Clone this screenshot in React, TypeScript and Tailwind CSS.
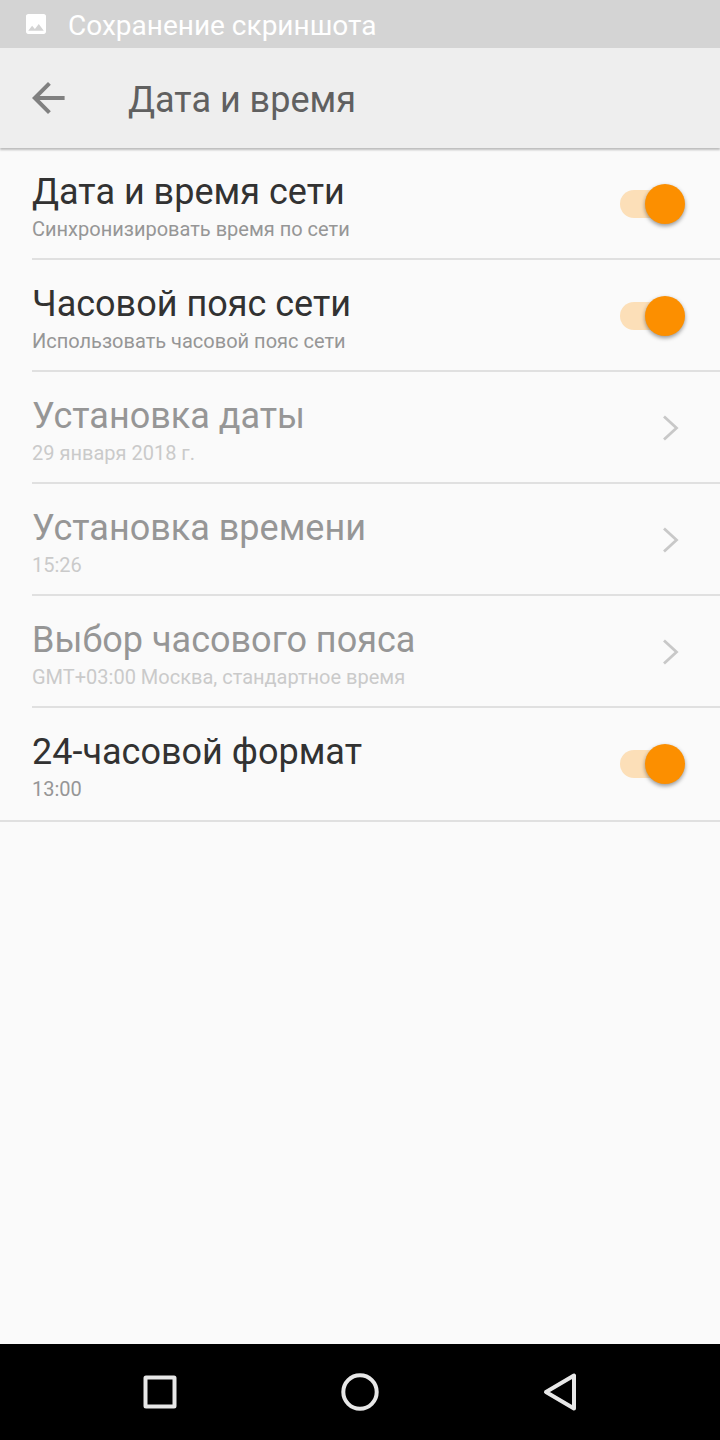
import React, { useState } from "react";
import clsx from "clsx";

type Setting = {
    id: string;
    title: string;
    summary: string;
    kind: "switch" | "link";
};

const settings: Setting[] = [
    { id: "network-time", title: "Дата и время сети", summary: "Синхронизировать время по сети", kind: "switch" },
    { id: "network-zone", title: "Часовой пояс сети", summary: "Использовать часовой пояс сети", kind: "switch" },
    { id: "set-date", title: "Установка даты", summary: "29 января 2018 г.", kind: "link" },
    { id: "set-time", title: "Установка времени", summary: "15:26", kind: "link" },
    { id: "set-zone", title: "Выбор часового пояса", summary: "GMT+03:00 Москва, стандартное время", kind: "link" },
    { id: "format-24", title: "24-часовой формат", summary: "13:00", kind: "switch" },
];

function RowText({ title, summary, muted }: { title: string; summary: string; muted?: boolean }) {
    return (
        <span className="flex min-w-0 flex-1 flex-col gap-1 pt-[22px] pb-4 text-left">
            <span className={clsx("text-4xl/10", muted ? "text-[#969696]" : "text-[#323232]")}>{title}</span>
            <span className={clsx("text-xl/[26px]", muted ? "text-[#cacaca]" : "text-[#969696]")}>{summary}</span>
        </span>
    );
}

function SwitchRow({ setting }: { setting: Setting }) {
    const [on, setOn] = useState(true);

    return (
        <label htmlFor={setting.id} className="flex items-center pt-0.5 pr-[35px]">
            <RowText title={setting.title} summary={setting.summary} />
            {/* track is the ::before, thumb is the ::after */}
            <input
                id={setting.id}
                type="checkbox"
                role="switch"
                checked={on}
                onChange={(e) => setOn(e.target.checked)}
                className="relative h-10 w-[65px] shrink-0 appearance-none before:absolute before:top-1.5 before:left-0 before:h-7 before:w-15 before:rounded-full before:bg-[#d0d0d0] after:absolute after:top-0 after:left-0 after:size-10 after:rounded-full after:bg-[#f1f1f1] after:shadow-[0_2px_4px_rgba(0,0,0,0.4)] checked:before:bg-[#fcdfb8] checked:after:left-[25px] checked:after:bg-[#fc8f00]"
            />
        </label>
    );
}

function LinkRow({ setting }: { setting: Setting }) {
    return (
        <button type="button" disabled className="flex w-full items-center pt-0.5 pr-10">
            <RowText title={setting.title} summary={setting.summary} muted />
            <svg viewBox="0 0 18 28" className="h-7 w-[18px] shrink-0" fill="none" stroke="#c8c8c8" strokeWidth="2.8" aria-hidden="true">
                <path d="M2 2.5 L14.5 14 L2 25.5" />
            </svg>
        </button>
    );
}

export default function App() {
    return (
        <div className="flex min-h-screen flex-col bg-[#fafafa] font-['Roboto','Noto_Sans',sans-serif]">
            <div className="flex h-12 items-center bg-[#d4d4d4] pl-[26px] text-white">
                <svg viewBox="3 3 18 18" className="size-5 shrink-0" fill="currentColor" aria-hidden="true">
                    <path d="M21 19V5c0-1.1-.9-2-2-2H5c-1.1 0-2 .9-2 2v14c0 1.1.9 2 2 2h14c1.1 0 2-.9 2-2zM8.500 13.500l2.500 3.010L14.500 12l4.500 6H5l3.500-4.500z" />
                </svg>
                <span className="pt-1 pl-[22px] text-[28px]/8">Сохранение скриншота</span>
            </div>

            <header className="relative flex h-[100px] items-center bg-[#eeeeee] pl-6 shadow-[0_2px_2px_rgba(0,0,0,0.25)]">
                <button type="button" aria-label="Назад" className="size-12 text-[#808080]">
                    <svg viewBox="0 0 24 24" className="size-12" fill="currentColor" aria-hidden="true">
                        <path d="M20.300 11H7.830l5.590-5.590L12 4l-8 8 8 8 1.410-1.410L7.830 13H20.300v-2z" />
                    </svg>
                </button>
                <h1 className="pt-1 pl-14 text-4xl/10 text-[#606060]">Дата и время</h1>
            </header>

            <main className="flex-1">
                <ul className="border-b-2 border-[#e0e0e0] pb-0.5 pl-8">
                    {settings.map((s, i) => (
                        <li key={s.id} className={clsx(i < settings.length - 1 && "border-b-2 border-[#e0e0e0]")}>
                            {s.kind === "switch" ? <SwitchRow setting={s} /> : <LinkRow setting={s} />}
                        </li>
                    ))}
                </ul>
            </main>

            <nav className="grid h-24 grid-cols-3 bg-black px-15 text-[#e8e8e8]">
                <button type="button" aria-label="Недавние" className="flex items-center justify-center">
                    <svg viewBox="0 0 40 40" className="size-10" fill="none" stroke="currentColor" strokeWidth="4" strokeLinejoin="round" aria-hidden="true">
                        <rect x="5.500" y="5.500" width="29" height="29" rx="0.5" />
                    </svg>
                </button>
                <button type="button" aria-label="Домой" className="flex items-center justify-center">
                    <svg viewBox="0 0 40 40" className="size-10" fill="none" stroke="currentColor" strokeWidth="4" aria-hidden="true">
                        <circle cx="20" cy="20" r="16.700" />
                    </svg>
                </button>
                <button type="button" aria-label="Обратно" className="flex items-center justify-center">
                    <svg viewBox="0 0 40 40" className="size-10" fill="none" stroke="currentColor" strokeWidth="4" strokeLinejoin="round" aria-hidden="true">
                        <path d="M34 3.500V36.500L6 20Z" />
                    </svg>
                </button>
            </nav>
        </div>
    );
}
